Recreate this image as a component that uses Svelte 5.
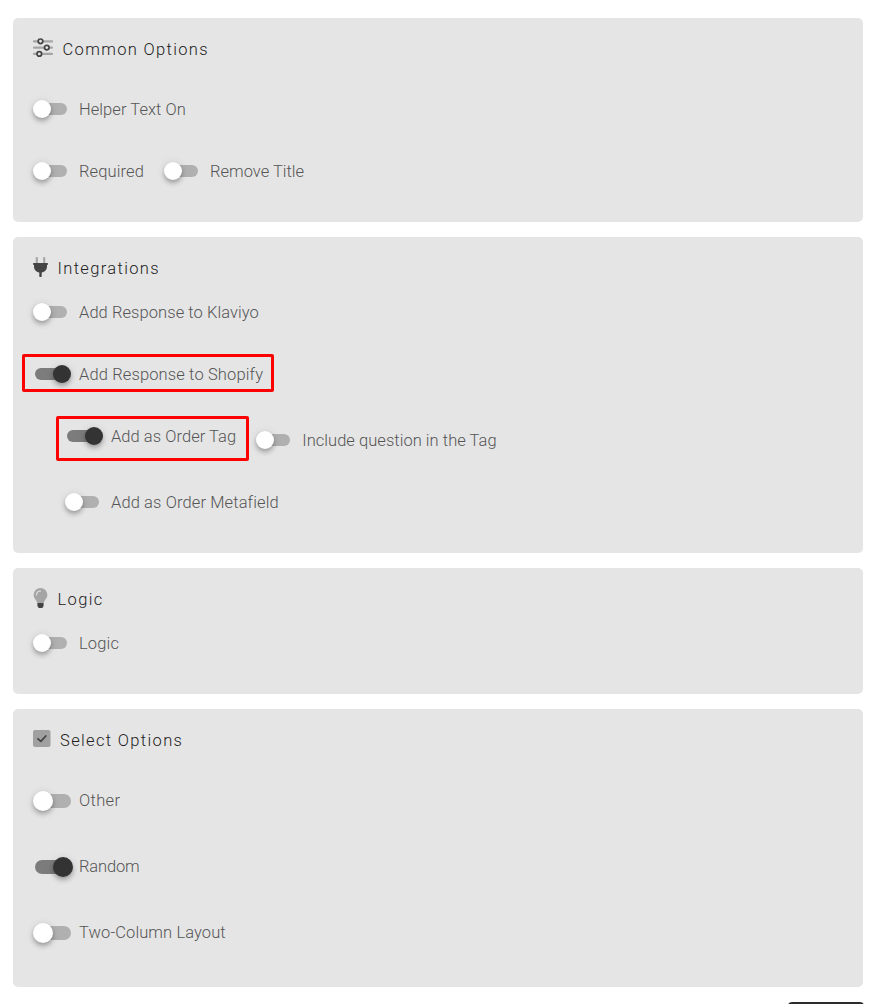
<script>
  const cards = [
    { title: 'Common Options', icon: 'sliders', head: 60, rows: [
      [{ label: 'Helper Text On', ls: 0.06 }],
      [{ label: 'Required', ls: 0.12 }, { label: 'Remove Title', ls: 0 }]
    ] },
    { title: 'Integrations', icon: 'plug', head: 44, rows: [
      [{ label: 'Add Response to Klaviyo', ls: 0.07 }],
      [{ label: 'Add Response to Shopify', ls: 0.13, on: true, mark: 'outer' }],
      [{ label: 'Add as Order Tag', ls: 0.05, on: true, mark: 'inner' }, { label: 'Include question in the Tag', ls: 0.04, low: true }],
      [{ label: 'Add as Order Metafield', ls: 0.11, sub: true }]
    ] },
    { title: 'Logic', icon: 'bulb', head: 44, rows: [[{ label: 'Logic', ls: 0.15 }]] },
    { title: 'Select Options', icon: 'check', head: 59, large: true, rows: [
      [{ label: 'Other', ls: 0.35 }],
      [{ label: 'Random', on: true, ls: -0.15 }],
      [{ label: 'Two-Column Layout', ls: 0.1 }]
    ] }
  ];
</script>

<main>
  {#each cards as card}
    <section class:large={card.large}>
      <header style:height="{card.head}px">
        {#if card.icon === 'sliders'}
          <svg width="20" height="20" viewBox="0 0 20 20">
            <path d="M1 3.3H19M1 9.6H19M1 15.9H19" stroke="#a5a5a5" stroke-width="2.3" stroke-linecap="round" />
            <g fill="#e5e5e5" stroke="#444" stroke-width="1.7"><circle cx="7.5" cy="3.3" r="2.3" /><circle cx="13.8" cy="9.6" r="2.3" /><circle cx="6.3" cy="15.9" r="2.3" /></g>
          </svg>
        {:else if card.icon === 'plug'}
          <svg width="15" height="20" viewBox="0 0 15 20">
            <path d="M3.8 1V6M11.2 1V6" stroke="#a5a5a5" stroke-width="2.1" stroke-linecap="round" />
            <path d="M.7 6H14.3Q15 6 15 6.7V7.3Q15 8 14 8V9.5C14 12.7 11.8 15 8.7 15.6V19.3Q8.7 20 8 20H7Q6.3 20 6.3 19.3V15.6C3.2 15 1 12.7 1 9.5V8Q0 8 0 7.3V6.7Q0 6 .7 6Z" fill="#444" />
          </svg>
        {:else if card.icon === 'bulb'}
          <svg width="15" height="20" viewBox="0 0 15 20">
            <path d="M7.5 0A7 7 0 0 1 14.4 7C14.4 10.3 11.4 12 10.7 15H4.3C3.6 12 .6 10.3 .6 7A7 7 0 0 1 7.5 0Z" fill="#a5a5a5" />
            <path d="M3.5 6.7A4.2 4.2 0 0 1 7.5 3" fill="none" stroke="#e5e5e5" stroke-width="1.2" stroke-linecap="round" />
            <path d="M4.4 15H10.6V18L9.3 20H5.7L4.4 18Z" fill="#444" />
          </svg>
        {:else}
          <svg width="17.5" height="20" viewBox="0 0 17.5 20">
            <rect x="0" y="1" width="17.5" height="17" rx="2" fill="#a0a0a0" />
            <path d="M5 9.8L7.8 12.3L12.8 7" fill="none" stroke="#444" stroke-width="1.8" stroke-linecap="round" stroke-linejoin="round" />
          </svg>
        {/if}
        <h2>{card.title}</h2>
      </header>
      {#each card.rows as row}
        <div class="row" class:nested={row[0].mark === 'inner' || row[0].sub} class:tall={row[0].mark === 'inner'}>
          {#each row as item}
            <label class:low={item.low}>
              <span class="switch" class:on={item.on}><i></i></span>
              <span class="text" style:letter-spacing="{item.ls}px">{item.label}</span>
              {#if item.mark}<span class="mark {item.mark}"></span>{/if}
            </label>
          {/each}
        </div>
      {/each}
    </section>
  {/each}
  <div class="button"></div>
</main>

<style>
  :global(body) { margin: 0; background: #fff; overflow: hidden; }
  main { box-sizing: border-box; height: 1004px; overflow: hidden; padding: 18px 12px 0 13px; display: flex; flex-direction: column; gap: 15px; font-family: Roboto, sans-serif; }
  section { flex: none; background: #e5e5e5; border-radius: 5px; padding: 0 20px 20px; }
  section.large { padding-bottom: 21px; }
  header { display: flex; align-items: flex-start; gap: 9.5px; box-sizing: border-box; padding-top: 20px; }
  header svg { flex: none; }
  h2 { margin: 2px 0 0; font-size: 16.5px; line-height: 20px; font-weight: 300; letter-spacing: 1.35px; color: #222; }
  .row { height: 62px; display: flex; align-items: center; gap: 20px; }
  .large .row { height: 66px; }
  .nested { padding-left: 32px; }
  .row.tall { height: 66px; align-items: flex-start; }
  .tall label { margin-top: 19px; }
  .tall label.low { margin-top: 23px; }
  label { position: relative; display: flex; align-items: center; height: 24px; }
  .switch { width: 38px; height: 20px; margin-right: 8px; display: flex; align-items: center; position: relative; }
  .switch::before { content: ''; width: 32px; height: 12px; margin-left: 2px; border-radius: 7px; background: #b0b0b0; }
  .switch i { position: absolute; left: 0; top: 1px; width: 18px; height: 18px; border-radius: 50%; background: #fff; box-shadow: 0 2px 4px -1px #0003, 0 4px 5px #00000024, 0 1px 8px #0000001f; }
  .switch.on::before { background: #7c7c7c; }
  .switch.on i { left: 20px; background: #333; }
  .large .switch::before { width: 36px; height: 14px; }
  .large .switch i { top: 0; width: 20px; height: 20px; }
  .text { padding-top: 2px; font-size: 16.5px; line-height: 24px; font-weight: 300; color: #555; white-space: nowrap; }
  .large .text { padding-top: 0; }
  .mark { position: absolute; box-sizing: border-box; border: 3px solid #f00; border-radius: 2px; }
  .outer { left: -11px; top: -8px; width: 252px; height: 38px; }
  .inner { left: -9px; top: -8px; width: 193px; height: 45px; }
  .button { flex: none; align-self: flex-end; width: 76px; height: 36px; margin-right: -1px; border-radius: 4px; background: #2d2b2d; }
</style>
